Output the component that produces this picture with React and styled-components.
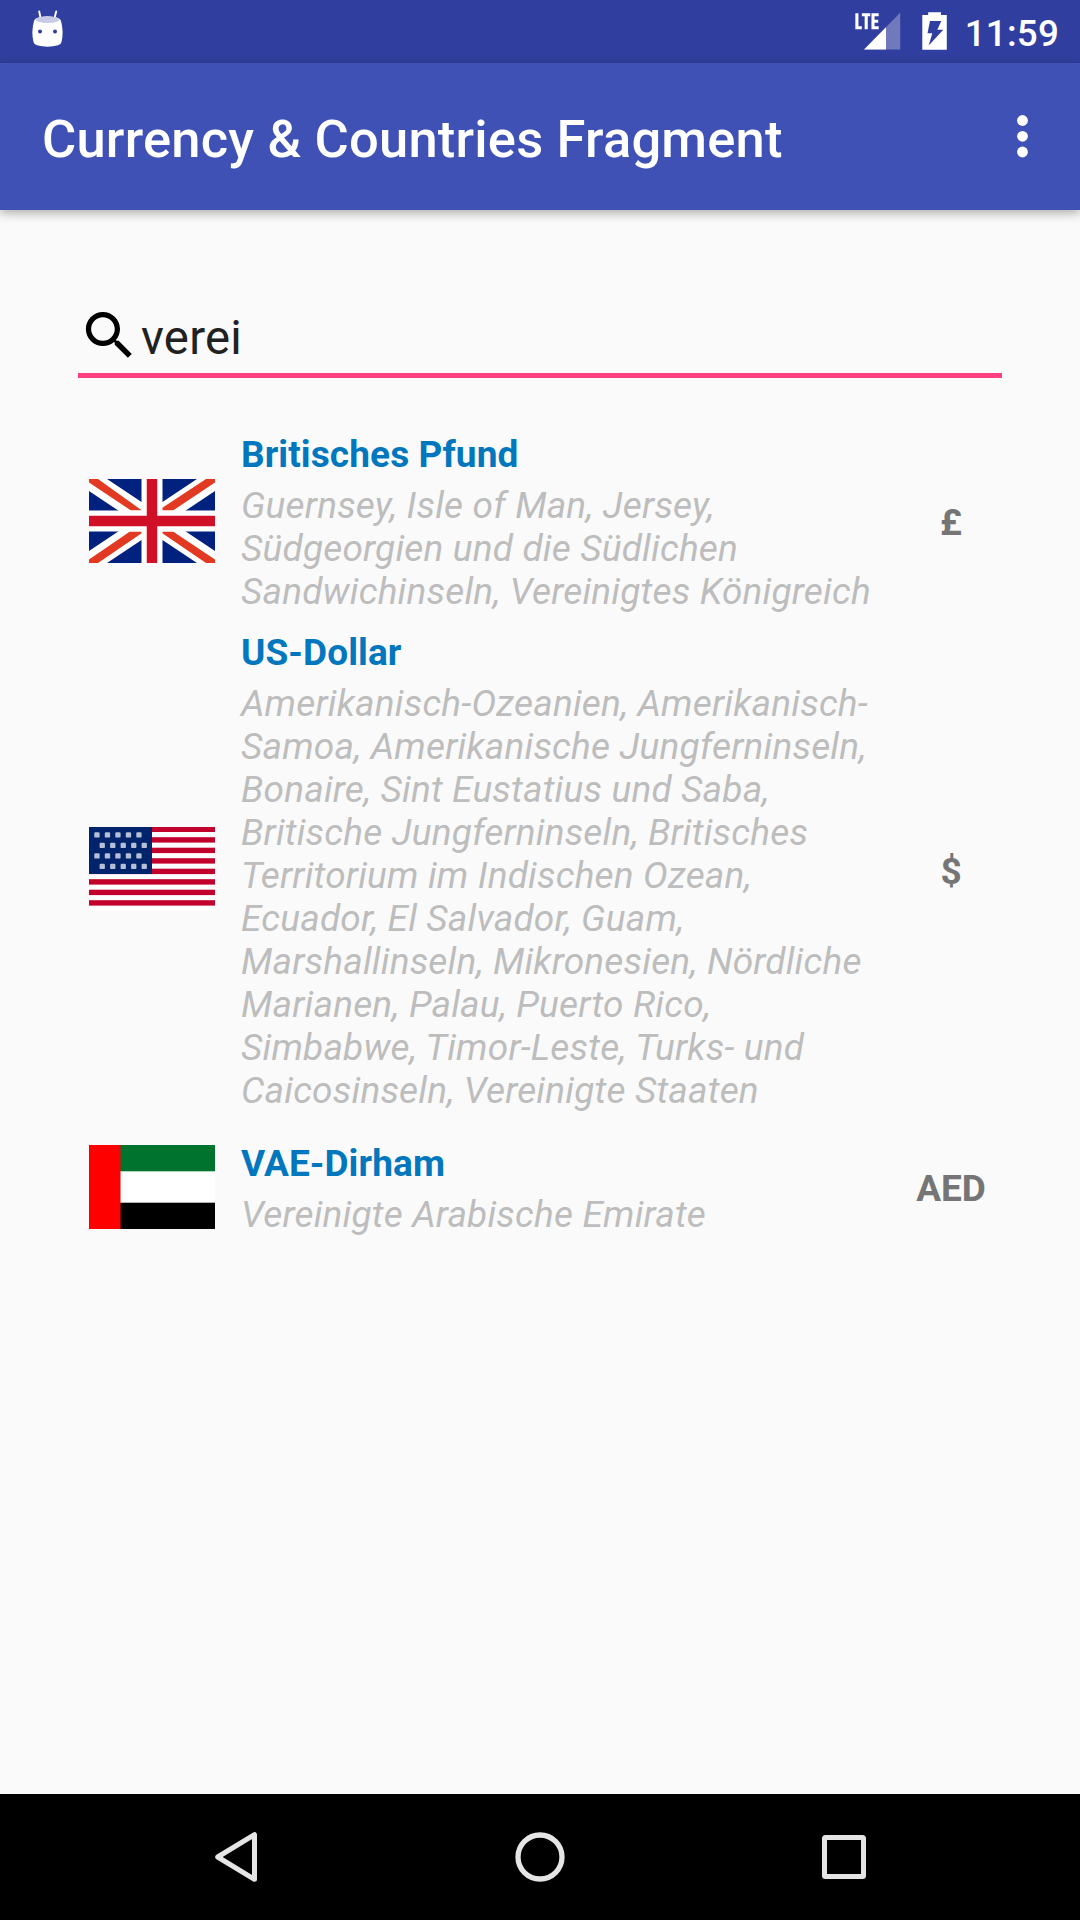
import React from "react";
import styled, { createGlobalStyle } from "styled-components";

const GlobalStyle = createGlobalStyle`
  * { box-sizing: border-box; }
  body { margin: 0; background: #fafafa; font-family: Roboto, sans-serif; }
`;

const Screen = styled.div`
  width: 1080px;
  height: 1920px;
  display: flex;
  flex-direction: column;
  background: #fafafa;
  overflow: hidden;
`;

const StatusBar = styled.header`
  height: 63px;
  flex: none;
  display: flex;
  align-items: center;
  justify-content: space-between;
  padding: 0 21px 0 31px;
  background: #303f9f;
  color: #fff;
`;

const StatusIcons = styled.div`
  display: flex;
  align-items: center;
  gap: 21px;
`;

const Clock = styled.span`
  margin: 4px 0 0 -3px;
  font-size: 36.75px;
  line-height: 43px;
  font-weight: 500;
  letter-spacing: 0.2px;
`;

const Toolbar = styled.div`
  height: 147px;
  flex: none;
  display: flex;
  align-items: center;
  justify-content: space-between;
  padding: 0 42px;
  background: #3f51b5;
  box-shadow: 0 3px 10px rgba(0, 0, 0, 0.32);
`;

const Title = styled.h1`
  margin: 5px 0 0;
  color: #fff;
  font-size: 52.5px;
  line-height: 62px;
  font-weight: 500;
  letter-spacing: 0.2px;
  white-space: nowrap;
`;

const Icon = styled.svg`
  display: block;
  flex: none;
  margin-top: ${(p) => p.$top || 0}px;
  margin-bottom: ${(p) => p.$bottom || 0}px;
`;

const Content = styled.main`
  flex: 1;
  padding: 84px 78px 0;
`;

const SearchField = styled.div`
  height: 84px;
  display: flex;
  align-items: center;
  border-bottom: 5px solid #ff4081;
`;

const Query = styled.span`
  color: #212121;
  font-size: 47.25px;
  line-height: 56px;
  margin-top: 8px;
  letter-spacing: 0.25px;
`;

const List = styled.ul`
  list-style: none;
  margin: 0;
  padding: 44px 0 0 11px;
`;

const Row = styled.li`
  min-height: 136px;
  display: flex;
  align-items: center;
  padding: 7px 0;
`;

const Details = styled.div`
  width: 636px;
  margin-left: 26px;
  padding-top: 4px;
  font-size: 37px;
  line-height: 43px;
`;

const Name = styled.div`
  color: #0277bd;
  font-weight: 700;
  letter-spacing: 0.1px;
`;

const Countries = styled.div`
  margin-top: 8px;
  color: #bdbdbd;
  font-style: italic;
  letter-spacing: 0.18px;
`;

const Symbol = styled.div`
  flex: 1;
  padding-top: 3px;
  margin-right: -23px;
  text-align: center;
  color: #757575;
  font-size: 37px;
  line-height: 43px;
  font-weight: 700;
`;

const NavBar = styled.nav`
  height: 126px;
  flex: none;
  display: flex;
  align-items: center;
  justify-content: center;
  gap: 240px;
  background: #000;
`;

const AndroidIcon = () => (
  <Icon $bottom={5} width="33" height="38" viewBox="31 10 33 38">
    <path d="M39.200 11.500l1.500 7M56.200 11.500l-1.800 7" stroke="#fff" strokeWidth="1.900" strokeLinecap="round" />
    <path d="M34 21Q34.300 19 37 18Q47.500 14.500 58 18Q60.600 19 61 21Q64 32 61.500 42Q61 44.500 58 45.300Q47.500 48 37 45.300Q34 44.500 33.500 42Q31 32 34 21Z" fill="#fff" />
    <ellipse cx="47.500" cy="19.700" rx="12" ry="3.300" fill="#c8cbe5" />
    <circle cx="40" cy="31.500" r="2" fill="#303f9f" />
    <circle cx="55" cy="31.500" r="2" fill="#303f9f" />
  </Icon>
);

const SignalIcon = () => (
  <Icon $bottom={1} width="46" height="38" viewBox="855 12 46 38">
    <path d="M864 49.500L900.200 12.800V49.500Z" fill="#7079bc" />
    <path d="M864 49.500L886 27.200V49.500Z" fill="#fff" />
    <path d="M856.900 13.300V27.700H861.800M861.900 14.700H870.300M866.200 14.700V29.200M878.700 14.700H873V27.700H878.700M873 21.200H878.200" fill="none" stroke="#fff" strokeWidth="3.100" />
  </Icon>
);

const BatteryIcon = () => (
  <Icon $bottom={1} width="25" height="38" viewBox="922 12 25 38">
    <path d="M928.200 12.300H941V15H946.800V49.700H922.300V15H928.200Z" fill="#fff" />
    <path d="M930 21H941.300L937.300 29.800H943.300L928.700 45.500L932.300 33.300H927.500Z" fill="#303f9f" />
  </Icon>
);

const MoreIcon = () => (
  <Icon width="32" height="43" viewBox="0 0 32 43">
    {[5.5, 21.3, 37].map((y) => (
      <circle key={y} cx="16.500" cy={y} r="5.400" fill="#fff" />
    ))}
  </Icon>
);

const SearchIcon = () => (
  <Icon $top={4} width="63" height="63" viewBox="0 0 24 24">
    <path d="M15.500 14h-.79l-.28-.27C15.410 12.590 16 11.110 16 9.500 16 5.910 13.090 3 9.500 3S3 5.910 3 9.500 5.910 16 9.500 16c1.610 0 3.090-.59 4.230-1.570l.27.28v.79l5 4.990L20.490 19l-4.990-5zm-6 0C7.010 14 5 11.990 5 9.500S7.010 5 9.500 5 14 7.010 14 9.500 11.990 14 9.500 14z" />
  </Icon>
);

const UkFlag = () => (
  <Icon width="126" height="84" viewBox="0 0 126 84">
    <rect width="126" height="84" fill="#00217e" />
    <path d="M0 0L126 84M126 0L0 84" stroke="#fff" strokeWidth="20" />
    <path
      d="M0 0H9L53 31.500H42L0 3.500ZM126 0H117L73 29V31.500H84L126 3.500ZM0 84H9L53 54V52.500H41L0 80.500ZM126 84H117L73 54V52.500H84L126 80.500Z"
      fill="#e23a22"
    />
    <path d="M63 0V84M0 42H126" stroke="#fff" strokeWidth="21" />
    <path d="M63 0V84M0 42H126" stroke="#d01027" strokeWidth="10.500" />
  </Icon>
);

const UsFlag = () => (
  <Icon $bottom={1} width="126" height="84" viewBox="0 0 126 84">
    <rect width="126" height="84" fill="#fff" />
    {[0, 1, 2, 3, 4, 5, 6, 7].map((n) => (
      <rect key={n} y={n ? n * 10.5 - 0.3 : 0} width="126" height={n ? 5.4 : 5} fill="#c1002b" />
    ))}
    <rect width="63" height="47" fill="#00246b" />
    {[0, 1, 2, 3].map((r) =>
      [0, 1, 2, 3, 4].map((c) => (
        <rect key={`${r}-${c}`} x={5.3 + c * 10.5 + (r % 2) * 5.3} y={5.3 + r * 10.5} width="5.300" height="5.300" rx="1.200" fill="#b5bfd6" />
      ))
    )}
  </Icon>
);

const UaeFlag = () => (
  <Icon width="126" height="84" viewBox="0 0 126 84">
    <rect width="126" height="84" fill="#fff" />
    <rect width="126" height="26.300" fill="#00732f" />
    <rect y="57.700" width="126" height="26.300" fill="#000" />
    <rect width="31.500" height="84" fill="#f00" />
  </Icon>
);

const currencies = [
  {
    name: "Britisches Pfund",
    symbol: "£",
    Flag: UkFlag,
    countries: "Guernsey, Isle of Man, Jersey, Südgeorgien und die Südlichen Sandwichinseln, Vereinigtes Königreich",
  },
  {
    name: "US-Dollar",
    symbol: "$",
    Flag: UsFlag,
    countries:
      "Amerikanisch-Ozeanien, Amerikanisch-Samoa, Amerikanische Jungferninseln, Bonaire, Sint Eustatius und Saba, Britische Jungferninseln, Britisches Territorium im Indischen Ozean, Ecuador, El Salvador, Guam, Marshallinseln, Mikronesien, Nördliche Marianen, Palau, Puerto Rico, Simbabwe, Timor-Leste, Turks- und Caicosinseln, Vereinigte Staaten",
  },
  {
    name: "VAE-Dirham",
    symbol: "AED",
    Flag: UaeFlag,
    countries: "Vereinigte Arabische Emirate",
  },
];

export default function App() {
  return (
    <Screen>
      <GlobalStyle />
      <StatusBar>
        <AndroidIcon />
        <StatusIcons>
          <SignalIcon />
          <BatteryIcon />
          <Clock>11:59</Clock>
        </StatusIcons>
      </StatusBar>
      <Toolbar>
        <Title>Currency &amp; Countries Fragment</Title>
        <MoreIcon />
      </Toolbar>
      <Content>
        <SearchField>
          <SearchIcon />
          <Query>verei</Query>
        </SearchField>
        <List>
          {currencies.map(({ name, symbol, Flag, countries }) => (
            <Row key={name}>
              <Flag />
              <Details>
                <Name>{name}</Name>
                <Countries>{countries}</Countries>
              </Details>
              <Symbol>{symbol}</Symbol>
            </Row>
          ))}
        </List>
      </Content>
      <NavBar>
        <Icon width="64" height="64" viewBox="0 0 64 64">
          <path d="M50.500 9.700V54.300L13.700 32Z" fill="none" stroke="#e5e5e5" strokeWidth="5" strokeLinejoin="round" />
        </Icon>
        <Icon width="64" height="64" viewBox="0 0 64 64">
          <circle cx="32" cy="32" r="22" fill="none" stroke="#e5e5e5" strokeWidth="5.300" />
        </Icon>
        <Icon width="64" height="64" viewBox="0 0 64 64">
          <rect x="12.500" y="12.500" width="39" height="39" rx="1" fill="none" stroke="#e5e5e5" strokeWidth="5" />
        </Icon>
      </NavBar>
    </Screen>
  );
}
